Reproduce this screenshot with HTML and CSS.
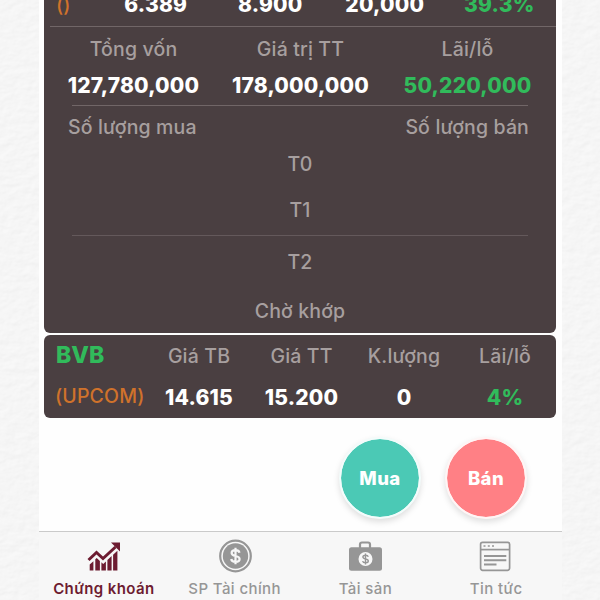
FILE: index.html
```
<!DOCTYPE html>
<html lang="vi">
<head>
<meta charset="utf-8">
<title>Chứng khoán</title>
<link rel="stylesheet" href="styles.css">
</head>
<body>
<svg class="paper" width="600" height="600" aria-hidden="true">
  <filter id="grain" x="0" y="0" width="100%" height="100%" color-interpolation-filters="sRGB">
    <feTurbulence type="fractalNoise" baseFrequency="0.09 0.14" numOctaves="3" seed="4"/>
    <feDiffuseLighting lighting-color="#ffffff" surfaceScale="0.45" diffuseConstant="1.11"><feDistantLight azimuth="50" elevation="60"/></feDiffuseLighting>
  </filter>
  <rect width="600" height="600" filter="url(#grain)"/>
</svg>
<main class="app">
  <section class="card card-open">
    <div class="row-price">
      <span class="exchange">()</span><b>6.389</b><b>8.900</b><b>20,000</b><b class="gain">39.3%</b>
    </div>
    <div class="totals">
      <span>Tổng vốn</span><span>Giá trị TT</span><span>Lãi/lỗ</span>
      <b>127,780,000</b><b>178,000,000</b><b class="gain">50,220,000</b>
    </div>
    <div class="quantities">
      <div class="sides"><span>Số lượng mua</span><span>Số lượng bán</span></div>
      <div class="day t0">T0</div>
      <div class="day t1">T1</div>
      <div class="day t2">T2</div>
      <div class="day pending">Chờ khớp</div>
    </div>
  </section>
  <section class="card stock">
    <strong class="ticker">BVB</strong><span>Giá TB</span><span>Giá TT</span><span>K.lượng</span><span>Lãi/lỗ</span>
    <span class="exchange">(UPCOM)</span><b>14.615</b><b>15.200</b><b>0</b><b class="gain">4%</b>
  </section>
  <div class="actions">
    <button class="fab buy">Mua</button>
    <button class="fab sell">Bán</button>
  </div>
  <nav class="tabs">
    <a class="tab active">
      <svg class="icon" viewBox="0 0 34 34">
        <path d="M1.500 21 9.500 13.500 16 19.500 28.500 8" fill="none" stroke="currentColor" stroke-width="3"/>
        <path d="M24 3.500H33V12.500zM2.700 25.500l3.700-3.300V31.500H2.700zM8.300 20.200l1.400-1.200 3.200 3V31.500H8.300zM14.400 23.300l1.800 1.600 2.700-2.500v9.100h-4.500zM20.400 21l4.200-4V31.500h-4.200zM26.100 15.700l4.300-4V31.500h-4.300z" fill="currentColor"/>
      </svg>
      <span>Chứng khoán</span>
    </a>
    <a class="tab">
      <svg class="icon" viewBox="0 0 34 34">
        <circle cx="17.500" cy="17" r="15.300" fill="none" stroke="currentColor" stroke-width="2.200"/>
        <circle cx="17.500" cy="17" r="12.700" fill="currentColor"/>
        <path d="M21.500 13.700c-.5-1.800-2-2.500-4-2.500-2.400 0-3.900 1-3.900 2.800 0 4.200 8 1.700 8 6 0 1.900-1.700 2.900-4.100 2.900-2.500 0-4-1-4.300-2.900M17.500 8.700v16.600" fill="none" stroke="#f7f7f7" stroke-width="2.200"/>
      </svg>
      <span>SP Tài chính</span>
    </a>
    <a class="tab">
      <svg class="icon" viewBox="0 0 34 34">
        <path d="M12 9V5.500q0-2 2-2h6q2 0 2 2V9" fill="none" stroke="currentColor" stroke-width="2.200"/>
        <rect x="1" y="8.300" width="33" height="23.500" rx="2.500" fill="currentColor"/>
        <circle cx="17.500" cy="20" r="7" fill="#f7f7f7"/>
        <path d="M20.300 17.700q-.5-1.500-2.800-1.500-2.600 0-2.600 1.800c0 2.700 5.400 1.200 5.400 4q0 1.800-2.800 1.800-2.500 0-2.900-1.700M17.500 14.500v11" fill="none" stroke="currentColor" stroke-width="1.400"/>
      </svg>
      <span>Tài sản</span>
    </a>
    <a class="tab">
      <svg class="icon" viewBox="0 0 34 34">
        <g fill="none" stroke="currentColor" stroke-width="1.700">
          <rect x="1.600" y="3.300" width="29" height="28" rx="2"/>
          <path d="M1.600 10.600H30.600"/>
          <path d="M5 17H27.300M5 21.300H27.300M5 25.600H17.500" stroke-width="2"/>
          <path d="M4.500 7h2M8.800 7h2M13 7h2" stroke-width="1.600"/>
        </g>
      </svg>
      <span>Tin tức</span>
    </a>
  </nav>
</main>
</body>
</html>
```

FILE: styles.css
```
* { box-sizing: border-box; }
body {
  margin: 0;
  width: 600px;
  height: 600px;
  overflow: hidden;
  background: #f6f6f6;
  font-family: Inter, "Open Sans", sans-serif;
}
.paper { position: absolute; inset: 0; opacity: .22; }
.app {
  position: relative;
  width: 523px;
  height: 600px;
  margin-left: 38.500px;
  padding: 0 5.500px;
  background: #fefefe;
  display: flex;
  flex-direction: column;
}
.card {
  background: #4a3f41;
  border-radius: 6px;
  color: #a79f9f;
  font-size: 19.500px;
  font-weight: 500;
  letter-spacing: .15px;
  text-align: center;
}
.card b { color: #fff; font-size: 21px; font-weight: 800; letter-spacing: .2px; }
.card .gain { color: #31bb5b; }
.card .exchange { color: #d0722b; text-align: left; }
.card-open { height: 333px; border-radius: 0 0 6px 6px; overflow: hidden; }
.row-price {
  display: grid;
  grid-template-columns: 42.500px repeat(4, 114.500px);
  height: 26px;
  margin-left: 12px;
  line-height: 10px;
}
.totals {
  display: grid;
  grid-template-columns: repeat(3, 167px);
  grid-template-rows: 44px 34px;
  height: 79px;
  margin-left: 6px;
  border-top: 1px solid #716667;
  line-height: 44px;
}
.totals b { line-height: 29px; }
.quantities { margin: 0 28px; border-top: 1px solid #716667; }
.sides { display: flex; justify-content: space-between; height: 35px; line-height: 43px; margin: 0 -1px 0 -4px; }
.day { height: 46px; line-height: 47px; }
.t1 { height: 48px; }
.t2 { height: 50px; line-height: 52px; border-top: 1px solid #64595b; }
.pending { line-height: 53px; }
.stock {
  display: grid;
  grid-template-columns: 91.500px 103px 102px 103px 99px;
  grid-template-rows: 42px 41px;
  height: 83px;
  margin-top: 2px;
  padding-left: 12px;
  line-height: 43px;
}
.stock b { line-height: 42px; }
.stock .ticker { color: #31bb5b; font-size: 23px; font-weight: 800; letter-spacing: 0; line-height: 40px; text-align: left; }
.stock .exchange { margin-left: -1px; line-height: 38px; }
.actions { display: flex; gap: 24px; margin: 19px 0 0 295px; }
.fab {
  width: 82px;
  height: 82px;
  padding: 0;
  border: 2px solid #f3fcfb;
  border-radius: 50%;
  background: #4bc9b5;
  background-clip: padding-box;
  box-shadow: 0 3px 6px rgba(0, 0, 0, .13);
  color: #fff;
  font: 800 18.500px/78px Inter, sans-serif;
  letter-spacing: .4px;
}
.sell { background-color: #ff8085; border-color: #fff5f5; }
.tabs {
  display: flex;
  margin: auto -5.500px 0;
  height: 69px;
  border-top: 1px solid #cacaca;
  background: #f7f7f7;
  color: #969696;
}
.tab { flex: 1; display: flex; flex-direction: column; align-items: center; padding-top: 7px; font-size: 15px; font-weight: 500; letter-spacing: .4px; line-height: 20px; white-space: nowrap; }
.tab span { margin-top: 6px; }
.icon { width: 34px; height: 34px; }
.active { color: #6d1c31; font-weight: 600; }
```
